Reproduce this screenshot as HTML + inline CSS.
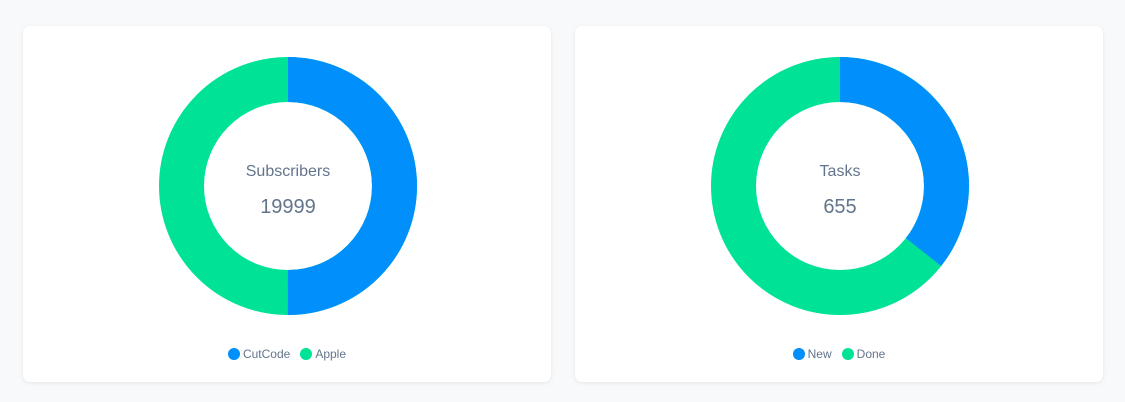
<!DOCTYPE html><html><head><style>
body{margin:0;width:1125px;height:402px;background:#f8f9fb;font-family:"Liberation Sans",sans-serif;position:relative;overflow:hidden}
.card{position:absolute;top:26px;width:528px;height:356px;background:#fff;border-radius:7px;box-shadow:0 1px 4px rgba(0,0,0,.08)}
svg{position:absolute;left:0;top:0}
.t{position:absolute;left:1px;width:528px;text-align:center;color:#64748b}
.l{position:absolute;top:321px;left:0;width:528px;text-align:center;font-size:12px;color:#64748b}
.d{display:inline-block;width:12px;height:12px;border-radius:50%;vertical-align:-2px;margin-right:3px}
</style></head><body>
<div class="card" style="left:23px">
<svg width="528" height="356"><g transform="rotate(-90 265 160)">
<circle cx="265" cy="160" r="106.5" fill="none" stroke="#00e396" stroke-width="45"/>
<circle cx="265" cy="160" r="106.5" fill="none" stroke="#008ffb" stroke-width="45" stroke-dasharray="334.6 1000"/></g></svg>
<div class="t" style="top:137px;font-size:16px">Subscribers</div>
<div class="t" style="top:170px;font-size:20px">19999</div>
<div class="l"><span class="d" style="background:#008ffb"></span>CutCode&nbsp;&nbsp;&nbsp;<span class="d" style="background:#00e396"></span>Apple</div>
</div>
<div class="card" style="left:575px">
<svg width="528" height="356"><g transform="rotate(-90 265 160)">
<circle cx="265" cy="160" r="106.5" fill="none" stroke="#00e396" stroke-width="45"/>
<circle cx="265" cy="160" r="106.5" fill="none" stroke="#008ffb" stroke-width="45" stroke-dasharray="238.5 1000"/></g></svg>
<div class="t" style="top:137px;font-size:16px">Tasks</div>
<div class="t" style="top:170px;font-size:20px">655</div>
<div class="l"><span class="d" style="background:#008ffb"></span>New&nbsp;&nbsp;&nbsp;<span class="d" style="background:#00e396"></span>Done</div>
</div>
</body></html>
